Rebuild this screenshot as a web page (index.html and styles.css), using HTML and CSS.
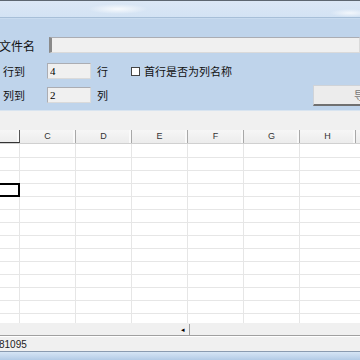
FILE: index.html
```html
<!DOCTYPE html>
<html lang="zh-CN">
<head>
    <meta charset="UTF-8">
    <title>导入Excel</title>
    <link rel="stylesheet" href="styles.css">
</head>
<body>
    <div class="window">
        <div class="titlebar"></div>
        <div class="panel">
            <div class="row row-file">
                <span class="label label-file">文件名</span>
                <input type="text" class="field field-file" readonly>
            </div>
            <div class="row row-start">
                <span class="label">行到</span>
                <input type="text" class="field field-num" value="4" readonly>
                <span class="unit">行</span>
                <label class="check"><span class="box"></span>首行是否为列名称</label>
            </div>
            <div class="row row-col">
                <span class="label">列到</span>
                <input type="text" class="field field-num" value="2" readonly>
                <span class="unit">列</span>
                <button class="import">导入</button>
            </div>
        </div>
        <div class="toolbar"></div>
        <div class="sheet">
            <div class="head">
                <div class="hcell hcell-sel"></div>
                <div class="hcell">C</div>
                <div class="hcell">D</div>
                <div class="hcell">E</div>
                <div class="hcell">F</div>
                <div class="hcell">G</div>
                <div class="hcell">H</div>
                <div class="hcell hcell-rest"></div>
            </div>
            <div class="cells">
                <div class="selected"></div>
            </div>
            <div class="hscroll">
                <span class="arrow">&#9666;</span>
                <span class="split"></span>
            </div>
        </div>
        <div class="status">81095</div>
        <div class="taskbar"></div>
    </div>
</body>
</html>
```

FILE: styles.css
```css
html, body {
    margin: 0;
    padding: 0;
    width: 360px;
    height: 360px;
    overflow: hidden;
    background: #f0f0f0;
    font-family: "Noto Sans CJK SC", "Liberation Sans", sans-serif;
}
.window {
    width: 360px;
    height: 360px;
    display: flex;
    flex-direction: column;
}
.titlebar {
    height: 16px;
    border-top: 1px solid #5d6670;
    border-bottom: 1px solid #a7bfd8;
    background:
        radial-gradient(ellipse 30px 5px at 118px 8px, rgba(255,255,255,0.8), transparent),
        radial-gradient(ellipse 20px 4px at 350px 12px, rgba(255,255,255,0.7), transparent),
        linear-gradient(to bottom, #dbe7f5, #d3e3f4);
}
.panel {
    height: 92px;
    box-sizing: border-box;
    padding-top: 18px;
    background: #bfd4eb;
    border-top: 1px solid #c8dbef;
}
.row {
    display: flex;
    align-items: center;
    height: 16px;
    font-size: 11px;
    color: #111;
}
.row-start {
    margin-top: 10px;
}
.row-col {
    margin-top: 8px;
}
.label {
    width: 47px;
    padding-left: 3px;
    box-sizing: border-box;
    white-space: nowrap;
}
.label-file {
    padding-left: 0;
    margin-left: -1px;
    width: 50px;
    font-size: 12px;
}
.field {
    height: 16px;
    box-sizing: border-box;
    background: #f0f0f0;
    border: 1px solid #dadada;
    border-top-color: #abadb3;
    border-left-color: #abadb3;
    padding: 0 2px;
    font-family: "Liberation Serif", serif;
    font-size: 11px;
    color: #000;
    outline: none;
}
.field-file {
    flex: 1;
    border-left: 3px solid #8a8a8a;
}
.field-num {
    width: 44px;
}
.unit {
    margin-left: 6px;
}
.check {
    display: flex;
    align-items: center;
    margin-left: 23px;
}
.box {
    width: 7px;
    height: 7px;
    border: 1px solid #444;
    background: #fff;
    margin-right: 4px;
}
.import {
    margin-left: auto;
    width: 60px;
    height: 21px;
    flex-shrink: 0;
    margin-right: -13px;
    padding: 0 0 0 40px;
    text-align: left;
    background: #ececec;
    border: 1px solid #cfd3d8;
    border-bottom: 2px solid #707070;
    font-family: inherit;
    font-size: 11px;
    color: #777;
    overflow: hidden;
    white-space: nowrap;
}
.toolbar {
    height: 19px;
    background: #f0f0f0;
    border-top: 1px solid #d8e4f0;
}
.sheet {
    background: #fff;
}
.head {
    display: flex;
    height: 14px;
    box-sizing: border-box;
    background: linear-gradient(to bottom, #f6f6f6, #ececec);
    border-bottom: 1px solid #d0d0d0;
}
.hcell {
    width: 56px;
    flex-shrink: 0;
    box-sizing: border-box;
    border-right: 1px solid #a8a8a8;
    box-shadow: inset -2px 0 0 #fafafa;
    text-align: center;
    font-family: "Liberation Sans", sans-serif;
    font-size: 9px;
    line-height: 13px;
    color: #333;
}
.hcell-sel {
    width: 20px;
    border-right-color: #555;
    border-bottom: 1px solid #333;
}
.hcell-rest {
    width: 10px;
    border-right: none;
}
.cells {
    position: relative;
    height: 179px;
    background:
        repeating-linear-gradient(to right, transparent 0 55px, #e6e6e6 55px 56px) -36px 0,
        repeating-linear-gradient(to bottom, #fff 0 12px, #e6e6e6 12px 13px) 0 1px;
}
.selected {
    position: absolute;
    left: -2px;
    top: 39px;
    width: 22px;
    height: 14px;
    border: 2px solid #000;
    box-sizing: border-box;
}
.hscroll {
    height: 13px;
    box-sizing: border-box;
    background: #f0f0f0;
    border-bottom: 1px solid #a0a0a0;
    display: flex;
    align-items: center;
    padding-left: 181px;
}
.arrow {
    font-size: 7px;
    color: #000;
    width: 8px;
}
.split {
    width: 1px;
    height: 11px;
    background: #a0a0a0;
}
.status {
    height: 15px;
    box-sizing: border-box;
    padding-top: 3px;
    border-top: 1px solid #fff;
    background: #f0f0f0;
    font-family: "Liberation Sans", sans-serif;
    font-size: 10px;
    line-height: 10px;
    color: #222;
    margin-left: -1px;
}
.taskbar {
    flex: 1;
    border-top: 1px solid #8a9bb0;
    background: linear-gradient(to bottom, #d6e5f5, #b3cbe6);
}
```
